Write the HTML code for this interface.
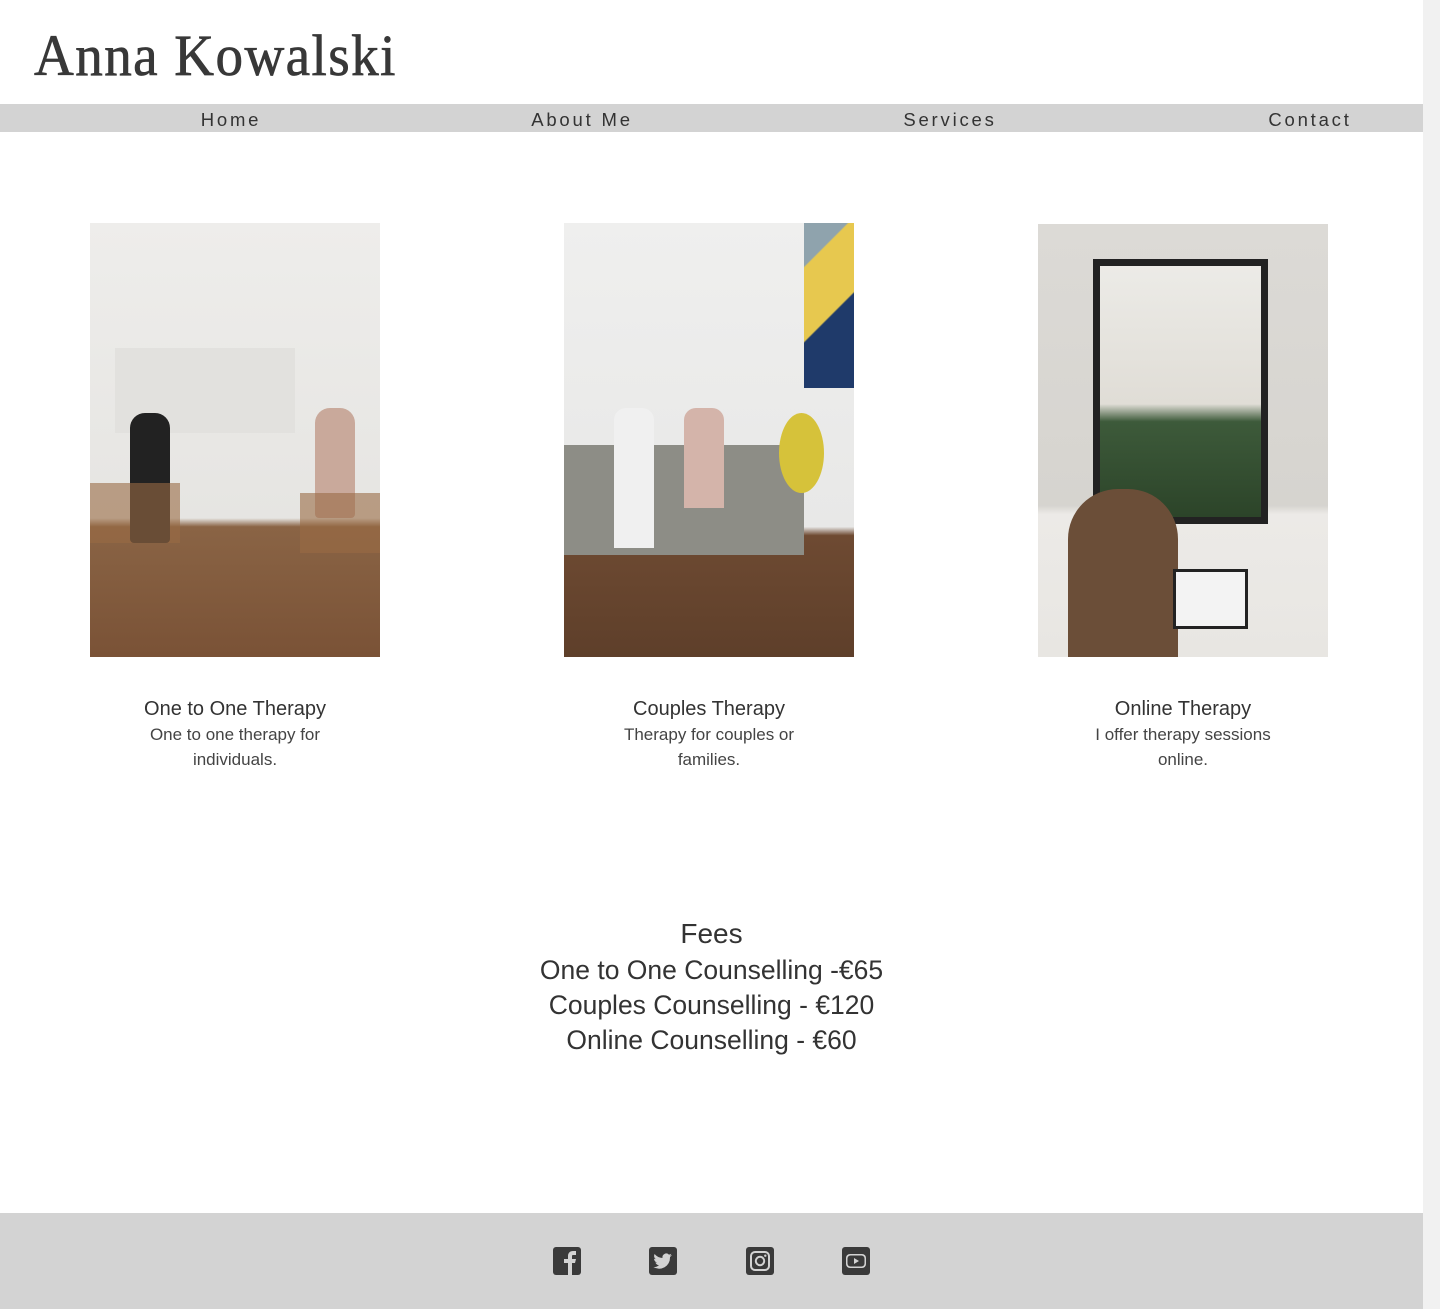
<!DOCTYPE html>
<html><head><meta charset="utf-8">
<style>
*{margin:0;padding:0;box-sizing:border-box}
html,body{width:1440px;height:1309px;overflow:hidden;background:#fff;font-family:"Liberation Sans",sans-serif;color:#333}
.page{position:relative;width:1423px;height:1309px}
.sb{position:absolute;right:0;top:0;width:17px;height:1309px;background:#f1f1f1}
h1{position:absolute;left:34px;top:22px;font-family:"Liberation Serif",serif;font-weight:normal;font-size:58px;letter-spacing:1.5px;color:#383838;-webkit-text-stroke:0.7px #383838;transform:scaleX(0.95);transform-origin:left}
nav{position:absolute;top:104px;left:0;width:1423px;height:28px;background:#d3d3d3}
nav span{position:absolute;top:5px;font-size:18.5px;letter-spacing:2.8px;color:#333;transform:translateX(-50%)}
.img{position:absolute;width:290px;height:434px;overflow:hidden}
.card{position:absolute;top:696px;width:290px;text-align:center;color:#333}
.card .t{font-size:20px;line-height:26px}
.card .d{font-size:17px;line-height:25px;padding:0 40px;color:#444}
.fees{position:absolute;top:915px;left:0;width:1423px;text-align:center}
.fees .h{font-size:28px;line-height:38px}
.fees .l{font-size:26.5px;line-height:35px}
footer{position:absolute;top:1213px;left:0;width:1423px;height:96px;background:#d3d3d3}
footer svg{position:absolute;top:34px;width:28px;height:28px}
</style></head><body><div class="page">
<h1>Anna Kowalski</h1>
<nav><span style="left:231px">Home</span><span style="left:582px">About Me</span><span style="left:950px">Services</span><span style="left:1310px">Contact</span></nav>

<div class="img" style="left:90px;top:223px;background:linear-gradient(#eeedeb 0%,#e6e5e2 68%,#8a6445 70%,#7a5236 100%)">
 <div style="position:absolute;left:25px;top:125px;width:180px;height:85px;background:#e2e1de"></div>
 <div style="position:absolute;left:40px;top:190px;width:40px;height:130px;background:#222;border-radius:15px 15px 4px 4px"></div>
 <div style="position:absolute;left:225px;top:185px;width:40px;height:110px;background:#c9a99b;border-radius:15px 15px 4px 4px"></div>
 <div style="position:absolute;left:0;top:260px;width:90px;height:60px;background:#9a6a45;opacity:.6"></div>
 <div style="position:absolute;left:210px;top:270px;width:80px;height:60px;background:#9a6a45;opacity:.6"></div>
</div>
<div class="img" style="left:564px;top:223px;background:linear-gradient(#efefee 0%,#e8e8e7 70%,#6e4a32 72%,#5e3f2a 100%)">
 <div style="position:absolute;left:240px;top:0;width:50px;height:165px;background:linear-gradient(135deg,#8fa3ad 20%,#e7c84f 21%,#e7c84f 55%,#1f3a6a 56%)"></div>
 <div style="position:absolute;left:0;top:222px;width:240px;height:110px;background:#8d8d86"></div>
 <div style="position:absolute;left:50px;top:185px;width:40px;height:140px;background:#f0f0f0;border-radius:12px 12px 0 0"></div>
 <div style="position:absolute;left:120px;top:185px;width:40px;height:100px;background:#d4b4aa;border-radius:12px 12px 0 0"></div>
 <div style="position:absolute;left:215px;top:190px;width:45px;height:80px;background:#d6c23a;border-radius:50%"></div>
</div>
<div class="img" style="left:1038px;top:224px;height:433px;background:linear-gradient(#dcdad6 0%,#d6d4cf 65%,#eceae7 67%,#e8e6e2 100%)">
 <div style="position:absolute;left:55px;top:35px;width:175px;height:265px;border:7px solid #222;background:linear-gradient(#ecebe7 0%,#e0ddd6 55%,#3d5a3a 62%,#2c4429 100%)"></div>
 <div style="position:absolute;left:30px;top:265px;width:110px;height:170px;background:#6b4e38;border-radius:50px 50px 0 0"></div>
 <div style="position:absolute;left:135px;top:345px;width:75px;height:60px;background:#222;border:3px solid #222;"><div style="width:100%;height:100%;background:#f3f3f3"></div></div>
</div>

<div class="card" style="left:90px"><div class="t">One to One Therapy</div><div class="d">One to one therapy for individuals.</div></div>
<div class="card" style="left:564px"><div class="t">Couples Therapy</div><div class="d">Therapy for couples or families.</div></div>
<div class="card" style="left:1038px"><div class="t">Online Therapy</div><div class="d" style="padding:0 30px">I offer therapy sessions online.</div></div>

<div class="fees"><div class="h">Fees</div><div class="l">One to One Counselling -€65</div><div class="l">Couples Counselling - €120</div><div class="l">Online Counselling - €60</div></div>

<footer>
<svg style="left:553px" viewBox="0 0 28 28"><rect width="28" height="28" rx="3" fill="#3a3a3a"/><path d="M15 28V16h-4v-4h4V9c0-3 2-5 5-5h3v4h-3c-1 0-1 1-1 1v3h4l-1 4h-3v12z" fill="#d3d3d3"/></svg>
<svg style="left:649px" viewBox="0 0 28 28"><rect width="28" height="28" rx="3" fill="#3a3a3a"/><path d="M23 8c-1 .5-1.6.6-2.3.7.8-.5 1.3-1.2 1.6-2-.8.4-1.6.8-2.4.9A3.8 3.8 0 0 0 13.5 11 10.8 10.8 0 0 1 5.6 7c-1 1.9-.4 4 1.2 5.1-.6 0-1.2-.2-1.7-.5 0 1.9 1.3 3.5 3 3.8-.5.2-1.1.2-1.7.1.5 1.5 1.9 2.600 3.6 2.7A7.7 7.7 0 0 1 4.4 20 10.8 10.8 0 0 0 21 10.5V10c.8-.6 1.5-1.3 2-2z" fill="#d3d3d3"/></svg>
<svg style="left:746px" viewBox="0 0 28 28"><rect width="28" height="28" rx="3" fill="#3a3a3a"/><rect x="5" y="5" width="18" height="18" rx="4" fill="none" stroke="#d3d3d3" stroke-width="2"/><circle cx="14" cy="14" r="4.2" fill="none" stroke="#d3d3d3" stroke-width="2"/><circle cx="19.3" cy="8.7" r="1.2" fill="#d3d3d3"/></svg>
<svg style="left:842px" viewBox="0 0 28 28"><rect width="28" height="28" rx="3" fill="#3a3a3a"/><rect x="4" y="7" width="20" height="14" rx="4" fill="#d3d3d3"/><rect x="5.5" y="8.5" width="17" height="11" rx="3" fill="#3a3a3a"/><path d="M12 11v6l5-3z" fill="#d3d3d3"/></svg>
</footer>
</div><div class="sb"></div></body></html>
